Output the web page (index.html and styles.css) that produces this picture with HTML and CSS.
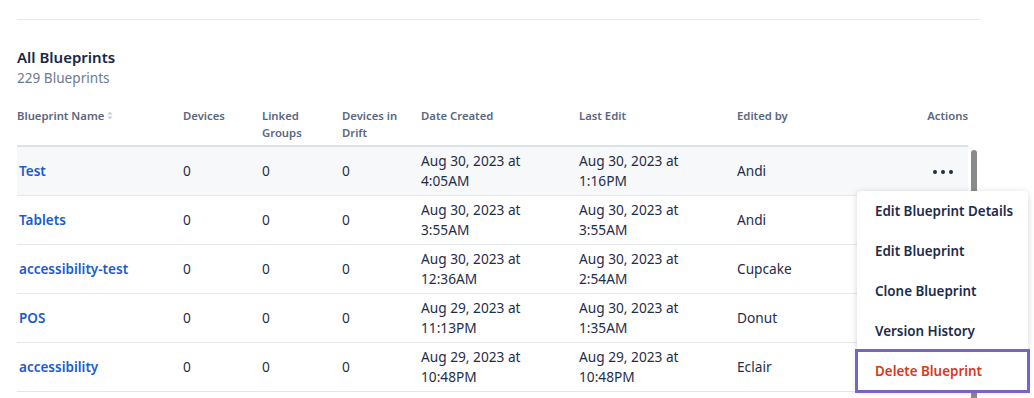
FILE: index.html
```html
<!DOCTYPE html>
<html>
<head>
<meta charset="utf-8">
<link rel="stylesheet" href="styles.css">
</head>
<body>
<div class="page">
  <div class="divider"></div>
  <div class="heading">
    <div class="title">All Blueprints</div>
    <div class="count">229 Blueprints</div>
  </div>
  <div class="table">
    <div class="row head">
      <div class="cell">Blueprint Name <span class="sort"><svg width="6" height="9" viewBox="0 0 6 9"><path d="M3 0.5 L5.5 3.5 H0.5 Z M3 8.5 L5.5 5.5 H0.5 Z" fill="#c4cad4"/></svg></span></div>
      <div class="cell">Devices</div>
      <div class="cell">Linked<br>Groups</div>
      <div class="cell">Devices in<br>Drift</div>
      <div class="cell">Date Created</div>
      <div class="cell">Last Edit</div>
      <div class="cell">Edited by</div>
      <div class="cell right">Actions</div>
    </div>
    <div class="row body hover">
      <div class="cell name">Test</div>
      <div class="cell num">0</div>
      <div class="cell num">0</div>
      <div class="cell num">0</div>
      <div class="cell">Aug 30, 2023 at<br>4:05AM</div>
      <div class="cell">Aug 30, 2023 at<br>1:16PM</div>
      <div class="cell">Andi</div>
      <div class="cell right"><span class="dots"><i></i><i></i><i></i></span></div>
    </div>
    <div class="row body">
      <div class="cell name">Tablets</div>
      <div class="cell num">0</div>
      <div class="cell num">0</div>
      <div class="cell num">0</div>
      <div class="cell">Aug 30, 2023 at<br>3:55AM</div>
      <div class="cell">Aug 30, 2023 at<br>3:55AM</div>
      <div class="cell">Andi</div>
      <div class="cell right"></div>
    </div>
    <div class="row body">
      <div class="cell name">accessibility-test</div>
      <div class="cell num">0</div>
      <div class="cell num">0</div>
      <div class="cell num">0</div>
      <div class="cell">Aug 30, 2023 at<br>12:36AM</div>
      <div class="cell">Aug 30, 2023 at<br>2:54AM</div>
      <div class="cell">Cupcake</div>
      <div class="cell right"></div>
    </div>
    <div class="row body">
      <div class="cell name">POS</div>
      <div class="cell num">0</div>
      <div class="cell num">0</div>
      <div class="cell num">0</div>
      <div class="cell">Aug 29, 2023 at<br>11:13PM</div>
      <div class="cell">Aug 30, 2023 at<br>1:35AM</div>
      <div class="cell">Donut</div>
      <div class="cell right"></div>
    </div>
    <div class="row body">
      <div class="cell name">accessibility</div>
      <div class="cell num">0</div>
      <div class="cell num">0</div>
      <div class="cell num">0</div>
      <div class="cell">Aug 29, 2023 at<br>10:48PM</div>
      <div class="cell">Aug 29, 2023 at<br>10:48PM</div>
      <div class="cell">Eclair</div>
      <div class="cell right"></div>
    </div>
  </div>
  <div class="scrollbar"></div>
  <div class="menu">
    <div class="item">Edit Blueprint Details</div>
    <div class="item">Edit Blueprint</div>
    <div class="item">Clone Blueprint</div>
    <div class="item">Version History</div>
    <div class="item danger focus">Delete Blueprint</div>
  </div>
</div>
</body>
</html>
```
FILE: styles.css
```css
html, body {
  margin: 0;
  padding: 0;
  background: #ffffff;
  overflow: hidden;
}
body {
  font-family: "Noto Sans", "Open Sans", sans-serif;
  color: #1c2a45;
  width: 1034px;
  height: 398px;
}
.page {
  position: relative;
  padding: 19px 0 0 17px;
}
.divider {
  width: 963px;
  height: 1px;
  background: #e6e8ec;
}
.heading {
  margin-top: 26px;
}
.title {
  font-size: 15px;
  line-height: 22px;
  font-weight: 600;
  color: #172748;
}
.count {
  font-size: 13.6px;
  line-height: 20px;
  color: #6c7a91;
}
.table {
  width: 951px;
  margin-top: 19px;
}
.row {
  display: grid;
  grid-template-columns: 166px 79px 80px 79px 158px 158px 1fr 80px;
  align-items: center;
}
.head {
  font-size: 11.3px;
  line-height: 17px;
  font-weight: 600;
  color: #5a6781;
  align-items: start;
  padding-bottom: 4px;
  border-bottom: 2px solid #dde1e8;
}
.head .cell {
  white-space: nowrap;
}
.sort {
  display: inline-block;
  vertical-align: 0px;
}
.body {
  height: 48px;
  border-bottom: 1px solid #e3e6eb;
  font-size: 13.7px;
  line-height: 20px;
  color: #1f2d47;
}
.hover {
  background: #f7f8fa;
}
.name {
  padding-left: 2px;
  font-size: 13.5px;
  font-weight: 600;
  color: #1a5bd0;
}
.right {
  text-align: right;
}
.dots {
  display: inline-flex;
  gap: 4px;
  margin-right: 15px;
  vertical-align: middle;
}
.dots i {
  display: block;
  width: 4px;
  height: 4px;
  border-radius: 50%;
  background: #1f2d47;
}
.scrollbar {
  position: absolute;
  left: 971px;
  top: 150px;
  width: 6px;
  height: 260px;
  border-radius: 3px;
  background: #8b8b8b;
}
.menu {
  position: absolute;
  left: 857px;
  top: 191px;
  width: 171px;
  background: #ffffff;
  border-radius: 4px;
  box-shadow: 0 1px 6px rgba(20, 30, 50, 0.18);
}
.item {
  height: 40px;
  line-height: 40px;
  padding-left: 18px;
  font-size: 13.4px;
  font-weight: 600;
  color: #1c2b4b;
  white-space: nowrap;
  box-sizing: border-box;
}
.danger {
  color: #d8381b;
}
.focus {
  outline: 3px solid #7b62c6;
  outline-offset: -1px;
  box-shadow: inset 0 0 0 3px #ffffff;
}
```
